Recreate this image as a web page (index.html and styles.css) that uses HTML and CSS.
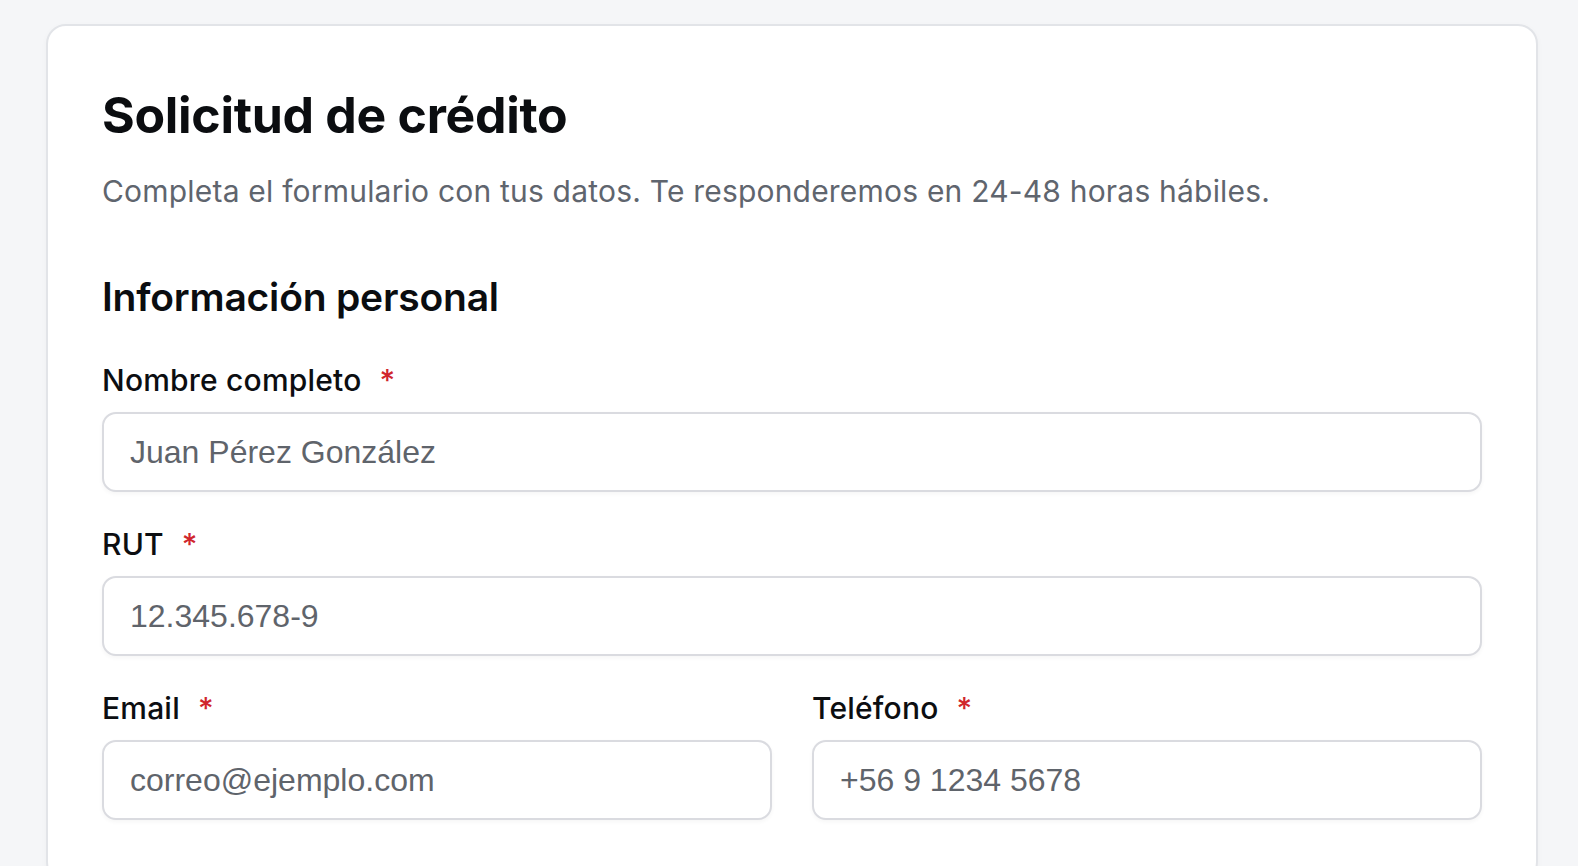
FILE: index.html
```html
<!DOCTYPE html>
<html lang="es">
<head>
<meta charset="utf-8">
<title>Solicitud de crédito</title>
<link rel="stylesheet" href="styles.css">
</head>
<body>
<main class="card">
  <h1 class="title">Solicitud de crédito</h1>
  <p class="subtitle">Completa el formulario con tus datos. Te responderemos en 24-48 horas hábiles.</p>
  <section class="section">
    <h2 class="section-title">Información personal</h2>
    <div class="fields">
      <div class="field">
        <label class="label" for="nombre">Nombre completo<span class="req">*</span></label>
        <input class="input" id="nombre" type="text" placeholder="Juan Pérez González">
      </div>
      <div class="field">
        <label class="label" for="rut">RUT<span class="req">*</span></label>
        <input class="input" id="rut" type="text" placeholder="12.345.678-9">
      </div>
      <div class="row">
        <div class="field">
          <label class="label" for="email">Email<span class="req">*</span></label>
          <input class="input" id="email" type="email" placeholder="correo@ejemplo.com">
        </div>
        <div class="field">
          <label class="label" for="tel">Teléfono<span class="req">*</span></label>
          <input class="input" id="tel" type="tel" placeholder="+56 9 1234 5678">
        </div>
      </div>
    </div>
  </section>
</main>
</body>
</html>
```

FILE: styles.css
```css
* { box-sizing: border-box; }

body {
  margin: 0;
  padding: 24px 40px 0 46px;
  background: #f5f6f8;
  font-family: Inter, "Noto Sans", sans-serif;
  color: #0c0e11;
}

.card {
  background: #ffffff;
  border: 2px solid #e2e4e8;
  border-radius: 20px;
  padding: 59px 54px 60px;
  box-shadow: 0 2px 6px rgba(0, 0, 0, 0.03);
}

.title {
  margin: 0;
  font-size: 50px;
  line-height: 60px;
  font-weight: 700;
  letter-spacing: -0.3px;
  color: #0b0d10;
}

.subtitle {
  margin: 25px 0 0;
  font-size: 30px;
  line-height: 42px;
  letter-spacing: 0.2px;
  color: #5f656e;
}

.section {
  margin-top: 61px;
}

.section-title {
  margin: 0;
  font-size: 39px;
  line-height: 48px;
  font-weight: 600;
  letter-spacing: -0.2px;
  color: #0b0d10;
}

.fields {
  margin-top: 38px;
  display: flex;
  flex-direction: column;
  gap: 31px;
}

.row {
  display: grid;
  grid-template-columns: 1fr 1fr;
  gap: 40px;
}

.field {
  display: flex;
  flex-direction: column;
}

.label {
  font-size: 30px;
  line-height: 42px;
  font-weight: 500;
  letter-spacing: 0.2px;
  color: #0c0e11;
  margin-bottom: 11px;
}

.req {
  color: #d0262d;
  margin-left: 18px;
}

.input {
  height: 80px;
  width: 100%;
  border: 2px solid #dadbe0;
  border-radius: 14px;
  padding: 0 26px;
  font-family: "Liberation Sans", Arial, sans-serif;
  font-size: 32px;
  color: #1f2328;
  background: #fff;
  box-shadow: 0 2px 4px rgba(0, 0, 0, 0.04);
  outline: none;
}

.input::placeholder {
  color: #5f646b;
  opacity: 1;
}
```
